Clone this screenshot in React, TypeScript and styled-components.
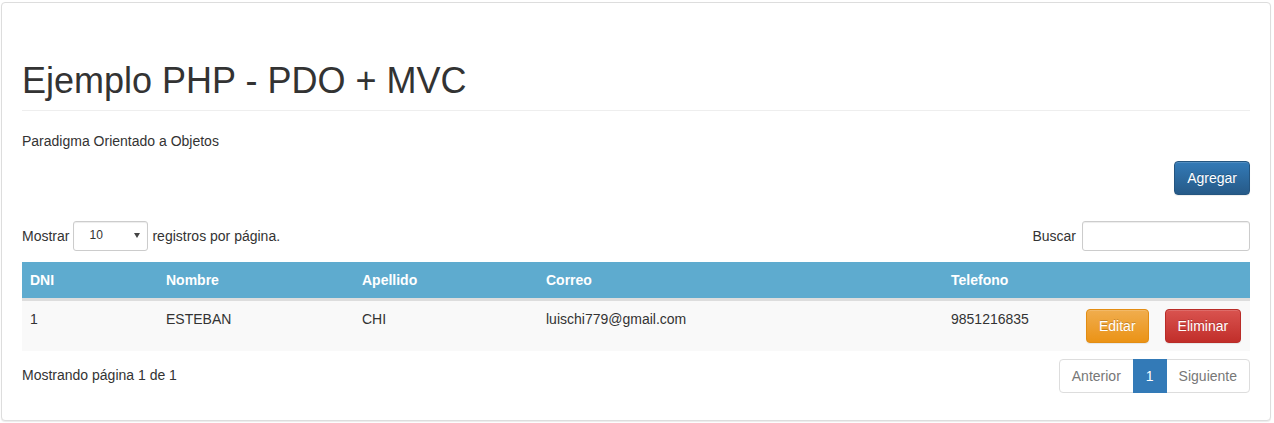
import React from "react";
import styled, { createGlobalStyle, css } from "styled-components";

const GlobalStyle = createGlobalStyle`
  * { box-sizing: border-box; }
  html, body { margin: 0; padding: 0; background: #fff; }
  body {
    font-family: "Liberation Sans", Arial, Helvetica, sans-serif;
    font-size: 14px;
    line-height: 1.42857143;
    color: #333;
  }
`;

const Page = styled.div`
  padding: 2px 3px 2px 1px;
`;

const Panel = styled.div`
  border: 1px solid #ddd;
  border-radius: 4px;
  box-shadow: 0 1px 1px rgba(0, 0, 0, 0.08);
  padding: 19px 20px 19px 20px;
  background: #fff;
`;

const Title = styled.h1`
  margin: 39px 0 20px;
  padding-bottom: 9px;
  border-bottom: 1px solid #eee;
  font-size: 36px;
  font-weight: 500;
  line-height: 1.1;
  color: #333;
`;

const Lead = styled.p`
  margin: 0 0 10px;
`;

const ActionBar = styled.div`
  display: flex;
  justify-content: flex-end;
  margin-bottom: 26px;
`;

type Variant = "primary" | "warning" | "danger";

const variants: Record<Variant, ReturnType<typeof css>> = {
  primary: css`
    background-image: linear-gradient(to bottom, #337ab7 0%, #265a88 100%);
    border-color: #245580;
  `,
  warning: css`
    background-image: linear-gradient(to bottom, #f0ad4e 0%, #eb9316 100%);
    border-color: #e38d13;
  `,
  danger: css`
    background-image: linear-gradient(to bottom, #d9534f 0%, #c12e2a 100%);
    border-color: #b92c28;
  `,
};

const Button = styled.button<{ $variant: Variant }>`
  display: inline-block;
  padding: 6px 12px;
  font-family: inherit;
  font-size: 14px;
  line-height: 20px;
  color: #fff;
  border: 1px solid transparent;
  border-radius: 4px;
  text-shadow: 0 -1px 0 rgba(0, 0, 0, 0.2);
  box-shadow: inset 0 1px 0 rgba(255, 255, 255, 0.15), 0 1px 1px rgba(0, 0, 0, 0.075);
  cursor: pointer;
  white-space: nowrap;
  ${(p) => variants[p.$variant]}
`;

const Controls = styled.div`
  display: flex;
  justify-content: space-between;
  align-items: center;
  height: 30px;
  margin-bottom: 11px;
`;

const Inline = styled.label`
  display: flex;
  align-items: center;
  gap: 4px;
  font-weight: normal;
`;

const SelectBox = styled.div`
  display: flex;
  align-items: center;
  justify-content: space-between;
  width: 75px;
  height: 30px;
  padding: 0 7px 0 15px;
  border: 1px solid #ccc;
  border-radius: 3px;
  font-size: 12px;
  color: #333;
  box-shadow: inset 0 1px 1px rgba(0, 0, 0, 0.075);
`;

const Caret = styled.span`
  width: 0;
  height: 0;
  border-left: 3px solid transparent;
  border-right: 3px solid transparent;
  border-top: 5px solid #444;
`;

const SearchInput = styled.input`
  width: 168px;
  height: 30px;
  padding: 5px 10px;
  border: 1px solid #ccc;
  border-radius: 3px;
  font-family: inherit;
  font-size: 12px;
  box-shadow: inset 0 1px 1px rgba(0, 0, 0, 0.075);
  margin-left: 2px;
`;

const Table = styled.table`
  width: 100%;
  border-collapse: collapse;
  border-spacing: 0;
  table-layout: fixed;
  margin-bottom: 8px;
`;

const Th = styled.th`
  padding: 8px;
  text-align: left;
  font-weight: bold;
  color: #fff;
  background: #5eabcf;
  border-bottom: 3px solid #ddd;
  line-height: 20px;
`;

const Td = styled.td`
  padding: 8px;
  vertical-align: top;
  border-top: 1px solid #ddd;
  background: #f9f9f9;
  line-height: 20px;
`;

const ActionsCell = styled.div`
  display: flex;
  gap: 16px;
`;

const Footer = styled.div`
  display: flex;
  justify-content: space-between;
  align-items: flex-start;
  margin-bottom: 8px;
`;

const Info = styled.div`
  padding-top: 6px;
`;

const Pager = styled.ul`
  display: flex;
  list-style: none;
  margin: 0;
  padding: 0;
`;

const PageItem = styled.li<{ $active?: boolean; $first?: boolean; $last?: boolean }>`
  padding: 6px 12px;
  line-height: 20px;
  border: 1px solid #ddd;
  margin-left: -1px;
  color: #777;
  background: #fff;
  ${(p) =>
    p.$first &&
    css`
      margin-left: 0;
      border-radius: 4px 0 0 4px;
    `}
  ${(p) =>
    p.$last &&
    css`
      border-radius: 0 4px 4px 0;
    `}
  ${(p) =>
    p.$active &&
    css`
      background: #337ab7;
      border-color: #337ab7;
      color: #fff;
      position: relative;
      z-index: 1;
    `}
`;

const columns = [
  { label: "DNI", width: 136 },
  { label: "Nombre", width: 196 },
  { label: "Apellido", width: 184 },
  { label: "Correo", width: 405 },
  { label: "Telefono", width: 135 },
  { label: "", width: undefined as number | undefined },
];

const rows = [
  { dni: "1", nombre: "ESTEBAN", apellido: "CHI", correo: "luischi779@gmail.com", telefono: "9851216835" },
];

export default function App() {
  return (
    <>
      <GlobalStyle />
      <Page>
        <Panel>
          <Title>Ejemplo PHP - PDO + MVC</Title>
          <Lead>Paradigma Orientado a Objetos</Lead>
          <ActionBar>
            <Button $variant="primary">Agregar</Button>
          </ActionBar>
          <Controls>
            <Inline>
              Mostrar
              <SelectBox>
                <span>10</span>
                <Caret />
              </SelectBox>
              registros por página.
            </Inline>
            <Inline>
              Buscar
              <SearchInput type="search" />
            </Inline>
          </Controls>
          <Table>
            <colgroup>
              {columns.map((c, i) => (
                <col key={i} style={c.width ? { width: c.width } : undefined} />
              ))}
            </colgroup>
            <thead>
              <tr>
                {columns.map((c, i) => (
                  <Th key={i}>{c.label}</Th>
                ))}
              </tr>
            </thead>
            <tbody>
              {rows.map((r) => (
                <tr key={r.dni}>
                  <Td>{r.dni}</Td>
                  <Td>{r.nombre}</Td>
                  <Td>{r.apellido}</Td>
                  <Td>{r.correo}</Td>
                  <Td>{r.telefono}</Td>
                  <Td>
                    <ActionsCell>
                      <Button $variant="warning">Editar</Button>
                      <Button $variant="danger">Eliminar</Button>
                    </ActionsCell>
                  </Td>
                </tr>
              ))}
            </tbody>
          </Table>
          <Footer>
            <Info>Mostrando página 1 de 1</Info>
            <Pager>
              <PageItem $first>Anterior</PageItem>
              <PageItem $active>1</PageItem>
              <PageItem $last>Siguiente</PageItem>
            </Pager>
          </Footer>
        </Panel>
      </Page>
    </>
  );
}
